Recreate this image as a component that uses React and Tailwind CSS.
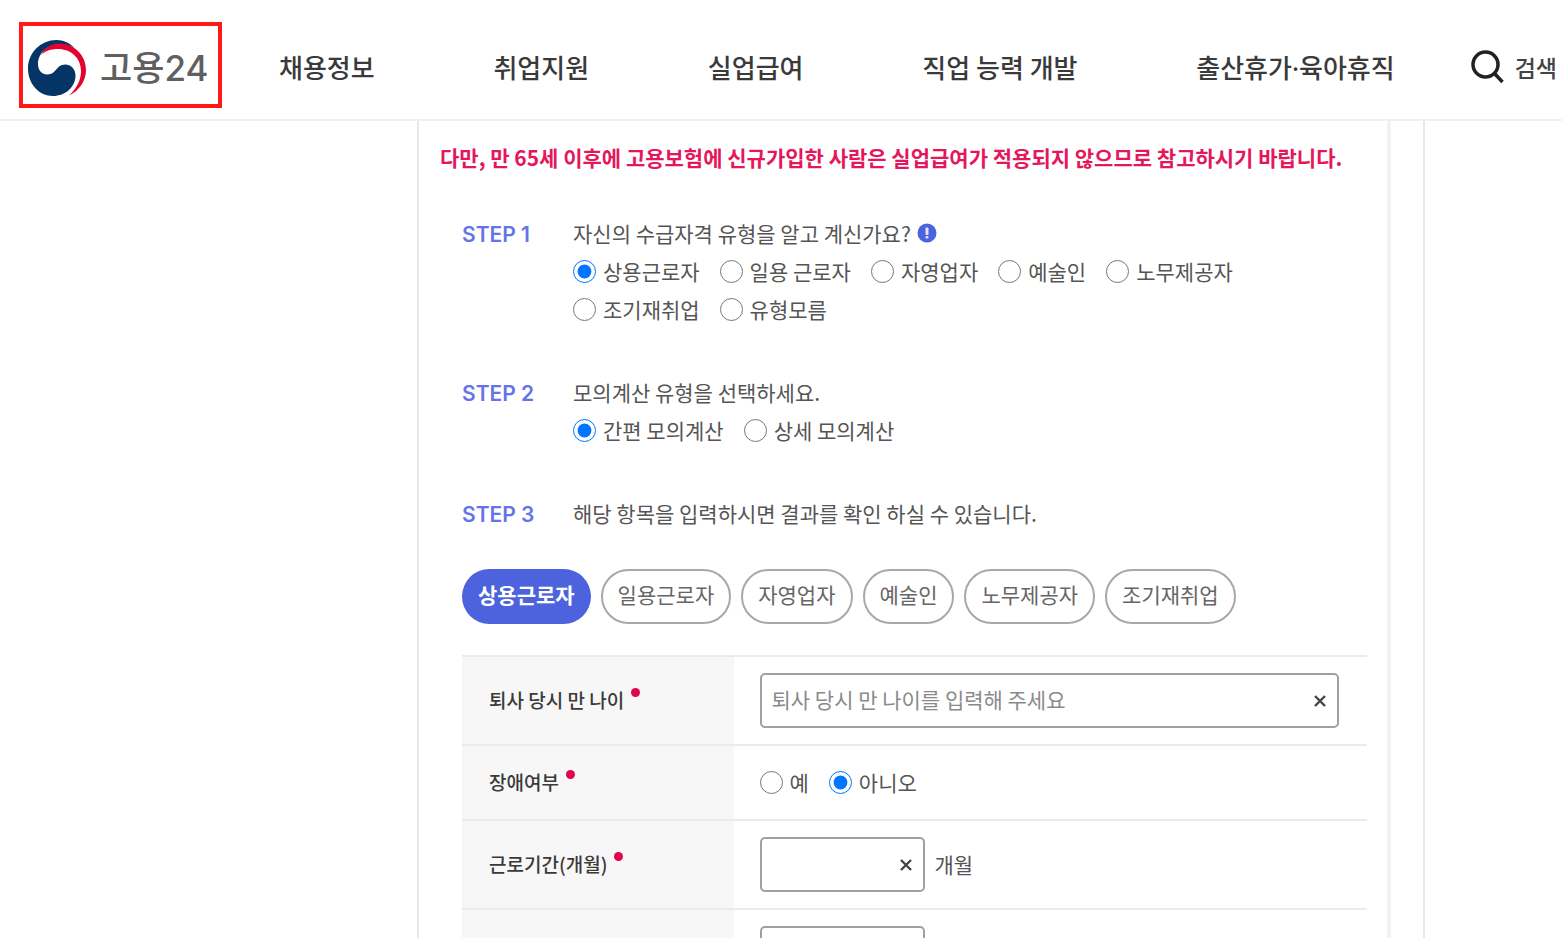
import { useState } from "react";

const menus = ["채용정보", "취업지원", "실업급여", "직업 능력 개발", "출산휴가·육아휴직"];
const workerTypes = ["상용근로자", "일용 근로자", "자영업자", "예술인", "노무제공자", "조기재취업", "유형모름"];
const calcTypes = ["간편 모의계산", "상세 모의계산"];
const tabs = ["상용근로자", "일용근로자", "자영업자", "예술인", "노무제공자", "조기재취업"];

function Logo() {
  return (
    <svg viewBox="0 0 58 56" className="h-14 w-[58px] shrink-0" aria-hidden="true">
      <path
        d="M28.500 0C13 0 0 12.500 0 28.500C0 44 11 56 25 56C37.500 56 47.500 47 47.500 35.500C47.500 29 43 24.500 37 24.500C28 24.500 28.500 34.500 19.500 34.500C13.500 34.500 10 30 10 24C10 13 20 4 32 4C38 4 43 6 46.500 8C42 3 35.500 0 28.500 0Z"
        fill="#053467"
      />
      <path
        d="M13 15C17 7 24 3.500 31.500 3.500C46 3.500 58 15 58 30C58 41 51 51 41 55.500C49 48 53 40 53 31C53 18 43 9 30 9C23 9 17 11 13 15Z"
        fill="#e4032e"
      />
    </svg>
  );
}

function RadioGroup({ name, options, value, onChange }) {
  return (
    <div className="flex flex-wrap gap-x-5" role="radiogroup">
      {options.map((option) => (
        <label key={option} className="flex h-[38px] items-center gap-[7px]">
          <input
            type="radio"
            name={name}
            checked={value === option}
            onChange={() => onChange(option)}
            className="size-[23px] accent-[#0075ff]"
          />
          {option}
        </label>
      ))}
    </div>
  );
}

function Step({ no, title, info, children }) {
  return (
    <section className="flex items-baseline leading-[38px]">
      <h2 className="w-[111px] shrink-0 font-[Inter,sans-serif] text-[21px] font-semibold text-[#6574e8]">STEP {no}</h2>
      <div className="flex-1">
        <div className="flex items-center gap-[6px]">
          <p>{title}</p>
          {info && (
            <button type="button" aria-label="도움말">
              <svg viewBox="0 0 20 20" className="size-5">
                <circle cx="10" cy="10" r="9.500" fill="#4c63dd" />
                <rect x="8.500" y="4.500" width="3" height="7.500" rx="1" fill="#dfe3fa" />
                <rect x="8.500" y="13" width="3" height="2.500" rx="1" fill="#dfe3fa" />
              </svg>
            </button>
          )}
        </div>
        {children}
      </div>
    </section>
  );
}

function ClearInput({ id, wide, placeholder, label }) {
  const [text, setText] = useState("");
  return (
    <div className={wide ? "relative w-full" : "relative w-[165px]"}>
      <input
        id={id}
        type="text"
        aria-label={label}
        value={text}
        placeholder={placeholder}
        onChange={(e) => setText(e.target.value)}
        className="h-[55px] w-full rounded-[5px] border-2 border-[#a0a0a0] bg-white pr-10 pb-1 pl-[10px] placeholder:text-[#8a8a8a]"
      />
      <button
        type="button"
        aria-label="지우기"
        onClick={() => setText("")}
        className="absolute inset-y-0 right-[13px] flex items-center"
      >
        <svg viewBox="0 0 12 12" className="size-3" stroke="#444" strokeWidth="2.400">
          <path d="M1 1L11 11M11 1L1 11" />
        </svg>
      </button>
    </div>
  );
}

function Row({ label, htmlFor, children }) {
  return (
    <tr className="h-[75px] border-t-2 border-[#ebebeb]">
      <th scope="row" className="w-[30%] bg-[#f7f7f7] px-[27px] text-left text-[19px] font-medium text-[#3a3a3a]">
        {label && (
          <label htmlFor={htmlFor} className="flex items-start gap-[7px]">
            {label}
            <span className="mt-[2px] size-[9px] rounded-full bg-[#e0054f]" />
          </label>
        )}
      </th>
      <td className="py-4 pr-7 pl-[26px]">{children}</td>
    </tr>
  );
}

export default function App() {
  const [worker, setWorker] = useState("상용근로자");
  const [calc, setCalc] = useState("간편 모의계산");
  const [tab, setTab] = useState("상용근로자");
  const [disabled, setDisabled] = useState("아니오");

  return (
    <div className="flex h-screen flex-col overflow-hidden bg-white font-['Noto_Sans_CJK_KR','Noto_Sans',sans-serif] text-[21px] text-[#555]">
      {/* 상단 메뉴 */}
      <header className="flex h-[121px] shrink-0 items-center border-b-2 border-[#f0f0f0] pt-[15px] pr-[5px] pl-[19px]">
        <a
          href="#"
          className="mb-1 flex h-[86px] w-[203px] shrink-0 items-center gap-[14px] border-4 border-[#ff1a1a] pt-[6px] pl-[5px] font-[Inter,'Noto_Sans_CJK_KR',sans-serif] text-[35px] font-medium whitespace-nowrap text-[#606060]"
        >
          <Logo />
          고용24
        </a>
        <nav className="ml-[57px] flex flex-1 items-baseline justify-between pr-[76px] text-[26px] font-medium whitespace-nowrap text-[#3a3a3a]">
          {menus.map((menu) => (
            <a
              key={menu}
              href="#"
              className={menu.includes("·") ? "font-['Noto_Sans','Noto_Sans_CJK_KR',sans-serif]" : ""}
            >
              {menu}
            </a>
          ))}
        </nav>
        <button type="button" className="flex items-center gap-[11px] text-[23px] font-medium whitespace-nowrap text-[#444]">
          <svg viewBox="0 0 33 34" className="h-[34px] w-[33px]" fill="none" stroke="#222" strokeWidth="3.500">
            <circle cx="14.500" cy="14.500" r="12.500" />
            <path d="M23.500 23.500L31.500 32" />
          </svg>
          검색
        </button>
      </header>

      {/* 본문 */}
      <main className="mr-[137px] ml-[417px] flex-1 overflow-hidden border-x-2 border-[#e8e8e8] pr-8">
        <div className="h-full border-r-4 border-[#f2f2f2] pt-[17px] pr-[20px] pl-[43px]">
          <p className="-mx-[22px] leading-[38px] font-bold whitespace-nowrap text-[#e5175c]">
            다만, 만 65세 이후에 고용보험에 신규가입한 사람은 실업급여가 적용되지 않으므로 참고하시기 바랍니다.
          </p>

          <div className="mt-[38px] flex flex-col gap-[45px]">
            <Step no={1} title="자신의 수급자격 유형을 알고 계신가요?" info>
              <div className="max-w-[700px]">
                <RadioGroup name="worker" options={workerTypes} value={worker} onChange={setWorker} />
              </div>
            </Step>
            <Step no={2} title="모의계산 유형을 선택하세요.">
              <RadioGroup name="calc" options={calcTypes} value={calc} onChange={setCalc} />
            </Step>
            <Step no={3} title="해당 항목을 입력하시면 결과를 확인 하실 수 있습니다." />
          </div>

          <div className="mt-[35px] flex gap-[10px]">
            {tabs.map((item) => (
              <button
                key={item}
                type="button"
                onClick={() => setTab(item)}
                className={`h-[55px] rounded-full pb-1 whitespace-nowrap ${
                  tab === item
                    ? "bg-[#4c63dd] px-4 font-bold text-white"
                    : "border-2 border-[#a8a8a8] px-[15px] text-[#666]"
                }`}
              >
                {item}
              </button>
            ))}
          </div>

          <table className="mt-[31px] w-full border-collapse">
            <tbody>
              <Row label="퇴사 당시 만 나이" htmlFor="age">
                <ClearInput id="age" wide placeholder="퇴사 당시 만 나이를 입력해 주세요" />
              </Row>
              <Row label="장애여부">
                <RadioGroup name="disabled" options={["예", "아니오"]} value={disabled} onChange={setDisabled} />
              </Row>
              <Row label="근로기간(개월)" htmlFor="months">
                <div className="flex items-center gap-[10px]">
                  <ClearInput id="months" />
                  <span>개월</span>
                </div>
              </Row>
              <Row>
                <ClearInput id="wage" label="월 급여" />
              </Row>
            </tbody>
          </table>
        </div>
      </main>
    </div>
  );
}
